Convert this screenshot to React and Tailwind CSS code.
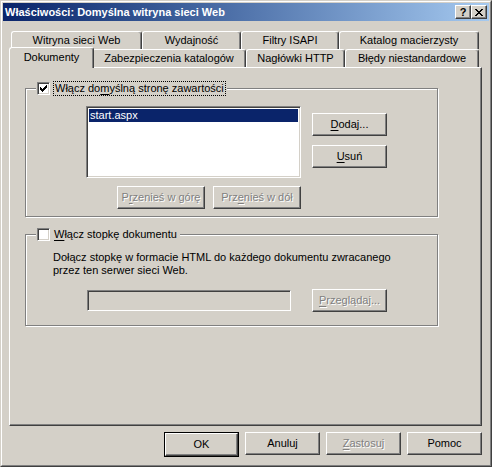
import React from 'react';

const raised =
  'border border-t-white border-l-white border-r-[#404040] border-b-[#404040] shadow-[inset_-1px_-1px_0_#808080]';
const sunken =
  'border border-t-[#808080] border-l-[#808080] border-r-white border-b-white shadow-[inset_1px_1px_0_#404040,inset_-1px_-1px_0_#d4d0c8]';
const disabledText = 'text-[#808080] [text-shadow:1px_1px_0_#ffffff]';

const U = ({ children }) => <span className="underline underline-offset-[2px]">{children}</span>;

const Button = ({ children, w = 'w-[75px]', h = 'h-[23px]', disabled, isDefault }) => {
  const inner = (
    <div className={`${raised} ${w} ${h} flex items-center justify-center bg-[#d4d0c8] ${disabled ? disabledText : 'text-black'}`}>
      <span className="whitespace-nowrap">{children}</span>
    </div>
  );
  if (isDefault) return <div className="border border-black">{inner}</div>;
  return inner;
};

const CheckMark = () => (
  <svg width="7" height="7" viewBox="0 0 7 7" shapeRendering="crispEdges">
    <rect x="0" y="2" width="1" height="3" fill="#000" />
    <rect x="1" y="3" width="1" height="3" fill="#000" />
    <rect x="2" y="4" width="1" height="3" fill="#000" />
    <rect x="3" y="3" width="1" height="3" fill="#000" />
    <rect x="4" y="2" width="1" height="3" fill="#000" />
    <rect x="5" y="1" width="1" height="3" fill="#000" />
    <rect x="6" y="0" width="1" height="3" fill="#000" />
  </svg>
);

const Checkbox = ({ checked }) => (
  <div className={`${sunken} w-[13px] h-[13px] bg-white flex items-center justify-center shrink-0`}>
    {checked && <CheckMark />}
  </div>
);

const Tab = ({ w, children, selected }) => {
  if (selected) {
    return (
      <div
        className={`relative z-10 -mx-[2px] -mt-[2px] h-[21px] ${w} bg-[#d4d0c8] flex justify-center pt-[3px] border-t border-l border-r border-t-white border-l-white border-r-[#404040] shadow-[inset_-1px_0_0_#808080] rounded-t-[3px]`}
      >
        {children}
      </div>
    );
  }
  return (
    <div
      className={`h-[18px] ${w} flex items-center justify-center border-t border-l border-r border-t-white border-l-white border-r-[#404040] shadow-[inset_-1px_0_0_#808080] rounded-t-[3px]`}
    >
      {children}
    </div>
  );
};

const GroupBox = ({ legend, className = '', children }) => (
  <div
    className={`w-[413px] border border-[#808080] shadow-[inset_1px_1px_0_#ffffff,1px_1px_0_#ffffff] ${className}`}
  >
    <div className="-mt-[8px] ml-[10px] w-fit px-[1px] bg-[#d4d0c8] flex items-center gap-[3px] h-[15px] whitespace-nowrap">
      {legend}
    </div>
    {children}
  </div>
);

export default function App() {
  return (
    <div className="w-[492px] h-[467px] bg-[#d4d0c8] border border-t-[#d4d0c8] border-l-[#d4d0c8] border-r-[#404040] border-b-[#404040] font-['Liberation_Sans',Arial,sans-serif] text-[11px] leading-[13px] text-black select-none">
      <div className="h-full border border-t-white border-l-white border-r-[#808080] border-b-[#808080] p-px flex flex-col">
        {/* title bar */}
        <div className="h-[18px] bg-linear-to-r from-[#0a246a] to-[#a6caf0] flex items-center justify-between pl-[2px] pr-[2px]">
          <span className="text-white font-bold text-[11px]">Właściwości: Domyślna witryna sieci Web</span>
          <div className="flex">
            <div className={`${raised} w-[16px] h-[14px] bg-[#d4d0c8] flex items-center justify-center font-bold text-[11px] leading-none`}>?</div>
            <div className={`${raised} w-[16px] h-[14px] bg-[#d4d0c8] flex items-center justify-center`}>
              <svg width="8" height="7" viewBox="0 0 8 7" shapeRendering="crispEdges">
                <path d="M0 0h2v1H0zM6 0h2v1H6zM1 1h2v1H1zM5 1h2v1H5zM2 2h4v1H2zM3 3h2v1H3zM2 4h4v1H2zM1 5h2v1H1zM5 5h2v1H5zM0 6h2v1H0zM6 6h2v1H6z" fill="#000" />
              </svg>
            </div>
          </div>
        </div>

        {/* tabs + panel */}
        <div className="pl-[6px] pt-[10px]">
          <div className="flex pl-[2px]">
            <Tab w="w-[131px]">Witryna sieci Web</Tab>
            <Tab w="w-[99px]">Wydajność</Tab>
            <Tab w="w-[98px]">Filtry ISAPI</Tab>
            <Tab w="w-[140px]">Katalog macierzysty</Tab>
          </div>
          <div className="flex pl-[2px] h-[18px]">
            <Tab w="w-[85px]" selected>Dokumenty</Tab>
            <Tab w="w-[154px]">Zabezpieczenia katalogów</Tab>
            <Tab w="w-[99px]">Nagłówki HTTP</Tab>
            <Tab w="w-[134px]">Błędy niestandardowe</Tab>
          </div>

          <div className="w-[473px] h-[359px] border border-t-white border-l-white border-r-[#404040] border-b-[#404040] shadow-[inset_-1px_-1px_0_#808080] pl-[15px] pt-[20px]">
            <GroupBox
              legend={
                <>
                  <Checkbox checked />
                  <span className="inline-block border border-dotted border-black px-[1px] leading-[13px]">
                    Włącz do<U>m</U>yślną stronę zawartości
                  </span>
                </>
              }
            >
              <div className="flex pl-[60px] mt-[10px]">
                <div className={`${sunken} w-[215px] h-[72px] bg-white p-[2px]`}>
                  <div className="h-[13px] bg-[#0a246a] text-white pl-[1px]">start.aspx</div>
                </div>
                <div className="ml-[11px] mt-[7px] flex flex-col gap-[9px]">
                  <Button><U>D</U>odaj...</Button>
                  <Button><U>U</U>suń</Button>
                </div>
              </div>
              <div className="flex pl-[91px] mt-[8px] mb-[7px] gap-[8px]">
                <Button w="w-[88px]" disabled>P<U>r</U>zenieś w górę</Button>
                <Button w="w-[88px]" disabled>Prz<U>e</U>nieś w dół</Button>
              </div>
            </GroupBox>

            <GroupBox
              className="mt-[17px]"
              legend={
                <>
                  <Checkbox />
                  <span className="pl-[1px] pr-[2px]"><U>W</U>łącz stopkę dokumentu</span>
                </>
              }
            >
              <div className="pl-[27px] mt-[9px]">
                Dołącz stopkę w formacie HTML do każdego dokumentu zwracanego
                <br />
                przez ten serwer sieci Web.
              </div>
              <div className="flex items-center pl-[61px] mt-[12px] mb-[13px]">
                <div className={`${sunken} w-[204px] h-[21px] bg-[#d4d0c8]`} />
                <div className="ml-[21px]">
                  <Button disabled><U>P</U>rzeglądaj...</Button>
                </div>
              </div>
            </GroupBox>
          </div>

          <div className="w-[473px] flex justify-end gap-[6px] mt-[6px]">
            <Button isDefault w="w-[73px]">OK</Button>
            <Button>Anuluj</Button>
            <Button disabled><U>Z</U>astosuj</Button>
            <Button>Pomoc</Button>
          </div>
        </div>
      </div>
    </div>
  );
}
